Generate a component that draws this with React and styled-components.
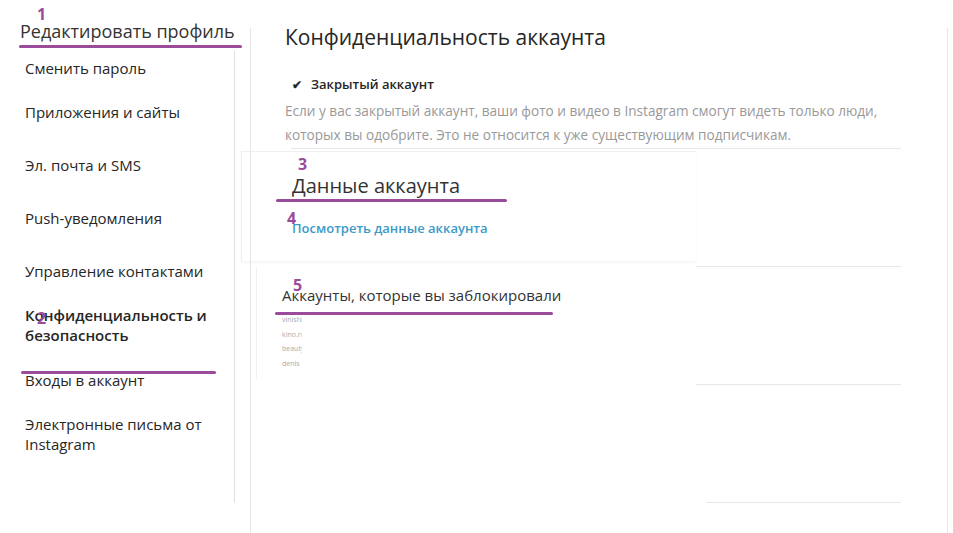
import React from "react";
import styled, { createGlobalStyle } from "styled-components";

const G = createGlobalStyle`
  body { margin:0; background:#fff; font-family:"Open Sans","Noto Sans",sans-serif; color:#262626; }
  * { box-sizing:border-box; }
`;
const Page = styled.div`position:relative; width:953px; height:533px; display:flex; overflow:hidden;`;
const Side = styled.div`width:235px; flex-shrink:0; display:flex; flex-direction:column; padding-top:12px;`;
const SideTitle = styled.div`font-size:18px; padding:7px 0 8px 20px; color:#333; white-space:nowrap;`;
const SideList = styled.div`border-right:1px solid #e0e0e0; height:452px; display:flex; flex-direction:column;`;
const Item = styled.div`
  flex-shrink:0; font-size:15px; line-height:20px; padding-left:25px; padding-right:12px;
  height:${p => p.h || 53}px; display:flex; align-items:center;
  font-weight:${p => p.b ? 600 : 400}; color:#262626;
`;
const Main = styled.div`
  margin-left:15px; margin-top:28px; width:698px; border-left:1px solid #e6e6e6; border-right:1px solid #e6e6e6;
  position:relative; display:flex; flex-direction:column;
`;
const H1 = styled.div`font-size:21px; margin:-5px 0 0 34px; color:#262626;`;
const CheckRow = styled.label`display:flex; align-items:center; gap:8px; margin:24px 0 0 39px; font-size:13px; font-weight:600;`;
const Box = styled.span`width:13px; height:13px; display:flex; align-items:center; justify-content:center; font-size:12px;`;
const Desc = styled.p`margin:6px 50px 0 34px; font-size:13.6px; line-height:24px; color:#999;`;
const Card = styled.div`
  margin:4px 0 0 -10px; width:455px; border-left:1px solid #eee; border-top:1px solid #efefef;
  padding:20px 0 24px 50px; box-shadow:0 2px 2px rgba(0,0,0,0.04);
`;
const H2 = styled.div`font-size:20px; color:#333;`;
const Link = styled.div`margin-top:20px; font-size:13px; font-weight:600; color:#3b9ac8;`;
const Card2 = styled.div`margin:6px 0 0 5px; width:440px; border-left:1px solid #f0f0f0; padding:18px 0 0 25px; height:112px;`;
const H3 = styled.div`font-size:15px; color:#333;`;
const Tiny = styled.div`font-size:7px; color:#aaa; line-height:14.5px; width:20px; overflow:hidden; white-space:nowrap;`;
const Sep = styled.div`position:absolute; left:${p=>p.l}px; right:46px; top:${p=>p.t}px; border-top:1px solid #e8e8e8;`;
const Num = styled.div`position:absolute; left:${p=>p.x}px; top:${p=>p.y}px; color:#9a4b9a; font-weight:700; font-size:16px; font-family:"Open Sans",sans-serif;`;
const Under = styled.div`position:absolute; left:${p=>p.x}px; top:${p=>p.y}px; width:${p=>p.w}px; height:3px; border-radius:2px; background:#9a4b9a;`;

export default function App(){
  return <Page>
    <G/>
    <Side>
      <SideTitle>Редактировать профиль</SideTitle>
      <SideList>
        <Item h={34}>Сменить пароль</Item>
        <Item>Приложения и сайты</Item>
        <Item>Эл. почта и SMS</Item>
        <Item>Push-уведомления</Item>
        <Item>Управление контактами</Item>
        <Item b h={56}>Конфиденциальность и безопасность</Item>
        <Item>Входы в аккаунт</Item>
        <Item h={56}>Электронные письма от Instagram</Item>
      </SideList>
    </Side>
    <Main>
      <H1>Конфиденциальность аккаунта</H1>
      <CheckRow><Box>✔</Box>Закрытый аккаунт</CheckRow>
      <Desc>Если у вас закрытый аккаунт, ваши фото и видео в Instagram смогут видеть только люди, которых вы одобрите. Это не относится к уже существующим подписчикам.</Desc>
      <Sep l={40} t={120}/>
      <Card>
        <H2>Данные аккаунта</H2>
        <Link>Посмотреть данные аккаунта</Link>
      </Card>
      <Sep l={445} t={238}/>
      <Card2>
        <H3>Аккаунты, которые вы заблокировали</H3>
        <div style={{marginTop:8}}>
          <Tiny>vinishka</Tiny><Tiny>kino.ru</Tiny><Tiny>beauty</Tiny><Tiny>denis</Tiny>
        </div>
      </Card2>
      <Sep l={445} t={356}/>
      <Sep l={455} t={474}/>
    </Main>
    <Num x={37} y={3}>1</Num><Under x={19} y={45} w={223}/>
    <Num x={37} y={307}>2</Num><Under x={21} y={371} w={195}/>
    <Num x={298} y={153}>3</Num><Under x={276} y={199} w={231}/>
    <Num x={287} y={207}>4</Num>
    <Num x={293} y={274}>5</Num><Under x={275} y={312} w={278}/>
  </Page>;
}
